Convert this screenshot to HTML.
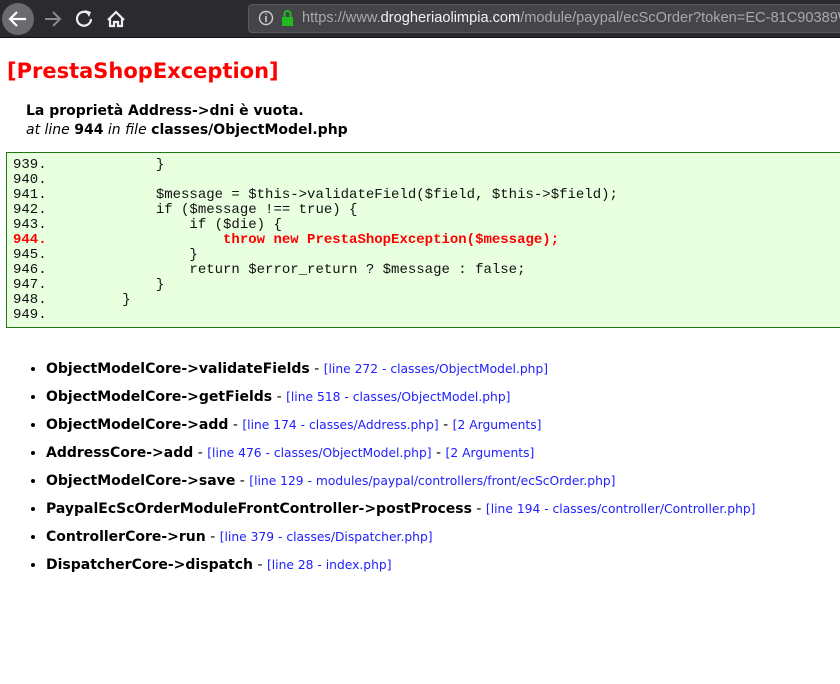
<!DOCTYPE html>
<html><head><meta charset="utf-8">
<style>
*{margin:0;padding:0;box-sizing:border-box}
html,body{width:840px;height:684px;overflow:hidden;background:#fff}
body{font-family:"DejaVu Sans",Verdana,sans-serif;color:#000;position:relative}
.bar{position:absolute;left:0;top:0;width:840px;height:38px;background:#2b2a2e;border-bottom:1px solid #111}
.url{position:absolute;left:248px;top:4px;width:600px;height:29px;background:#454449;border:1px solid #5a595e;border-radius:4px;color:#a9a9ad;font-family:"Liberation Sans",Arial,sans-serif;font-size:14.6px;line-height:27px;padding-left:53px;white-space:nowrap}
.url b{font-weight:normal;color:#f2f2f2}
h1{position:absolute;left:7px;top:59px;font-size:21px;font-weight:bold;color:#f00;white-space:nowrap}
.msg{position:absolute;left:26px;top:102px;font-size:14px;line-height:19px;white-space:nowrap}
.box{position:absolute;left:6px;top:152px;width:850px;height:176px;background:#e8ffe0;border:1px solid #207a10;padding:5px 0 0 6px}
pre{font-family:"Liberation Mono","DejaVu Sans Mono",monospace;font-size:14px;line-height:15px;color:#111}
pre .e{color:#f00;font-weight:bold}
ul{position:absolute;left:46px;top:359px;list-style:disc;font-size:14px;white-space:nowrap}
li{height:28px;line-height:20px}
li b{font-weight:bold}
li span{color:#2020ff;font-size:12.3px}
</style></head><body>
<div class="bar">
<svg width="240" height="38" style="position:absolute;left:0;top:0">
<circle cx="18" cy="19" r="16" fill="#6b6a6e"/>
<path d="M26 19H11M17 12l-7 7 7 7" stroke="#fff" stroke-width="2.2" fill="none"/>
<path d="M60 19H45M53 12l7 7-7 7" stroke="#8a898d" stroke-width="2" fill="none"/>
<path d="M88 13a7 7 0 1 0 3 6" stroke="#eee" stroke-width="2.2" fill="none"/><path d="M85 10l6 2-2 5z" fill="#eee"/>
<path d="M108 20l8-8 8 8M110 18v8h4v-4h4v4h4v-8" stroke="#eee" stroke-width="2.2" fill="none"/>
</svg>
<div class="url"><svg width="50" height="27" style="position:absolute;left:6px;top:0"><circle cx="11" cy="13" r="6.5" stroke="#ccc" stroke-width="1.4" fill="none"/><path d="M11 11v6M11 8.5v1" stroke="#ccc" stroke-width="1.6"/><rect x="27" y="12" width="11" height="9" fill="#1fba1f"/><path d="M29.5 12v-3a3 3 0 0 1 6 0v3" stroke="#1fba1f" stroke-width="2" fill="none"/></svg>https://www.<b>drogheriaolimpia.com</b>/module/paypal/ecScOrder?token=EC-81C90389W</div>
</div>
<h1>[PrestaShopException]</h1>
<div class="msg"><b>La proprietà Address-&gt;dni è vuota.</b><br><i>at line </i><b>944</b><i> in file </i><b>classes/ObjectModel.php</b></div>
<div class="box"><pre>939.             }
940.
941.             $message = $this-&gt;validateField($field, $this-&gt;$field);
942.             if ($message !== true) {
943.                 if ($die) {
<span class="e">944.                     throw new PrestaShopException($message);</span>
945.                 }
946.                 return $error_return ? $message : false;
947.             }
948.         }
949.</pre></div>
<ul>
<li><b>ObjectModelCore-&gt;validateFields</b> - <span>[line 272 - classes/ObjectModel.php]</span></li>
<li><b>ObjectModelCore-&gt;getFields</b> - <span>[line 518 - classes/ObjectModel.php]</span></li>
<li><b>ObjectModelCore-&gt;add</b> - <span>[line 174 - classes/Address.php]</span> - <span>[2 Arguments]</span></li>
<li><b>AddressCore-&gt;add</b> - <span>[line 476 - classes/ObjectModel.php]</span> - <span>[2 Arguments]</span></li>
<li><b>ObjectModelCore-&gt;save</b> - <span>[line 129 - modules/paypal/controllers/front/ecScOrder.php]</span></li>
<li><b>PaypalEcScOrderModuleFrontController-&gt;postProcess</b> - <span>[line 194 - classes/controller/Controller.php]</span></li>
<li><b>ControllerCore-&gt;run</b> - <span>[line 379 - classes/Dispatcher.php]</span></li>
<li><b>DispatcherCore-&gt;dispatch</b> - <span>[line 28 - index.php]</span></li>
</ul>
</body></html>
